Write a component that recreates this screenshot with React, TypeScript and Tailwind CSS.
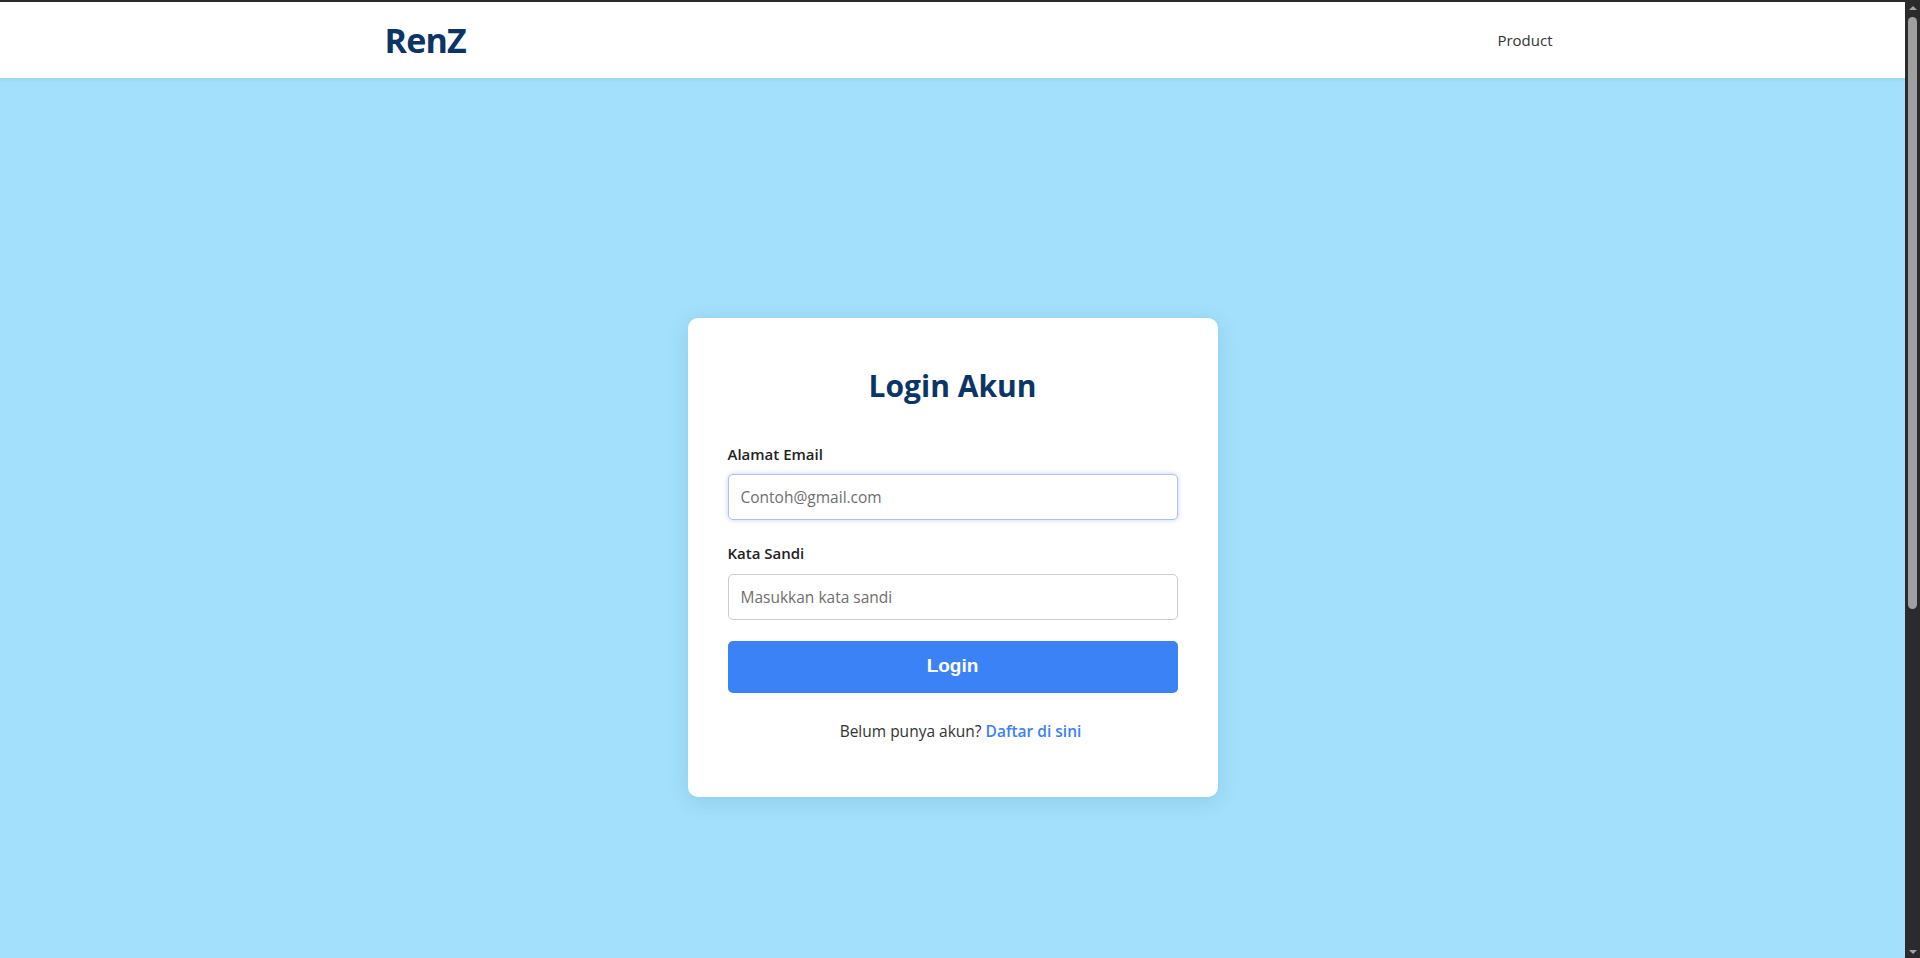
import React from "react";

const sans = { fontFamily: '"Open Sans", "Noto Sans", sans-serif' };

export default function App() {
  return (
    <div className="h-screen w-full overflow-hidden flex flex-col bg-[#2b2b2b]" style={sans}>
      <div className="h-[2px] w-full bg-[#2b2b2b] shrink-0" />
      <div className="flex flex-1 min-h-0">
        <div className="flex-1 flex flex-col min-w-0 overflow-hidden">
          <nav className="h-[76px] shrink-0 bg-white shadow-[0_2px_4px_rgba(0,0,0,0.06)] relative z-10">
            <div className="w-[1200px] mx-auto h-full pl-8 flex items-center justify-between">
              <div className="text-[34px] font-bold text-[#0a3566] tracking-[-0.8px] leading-none">RenZ</div>
              <a className="text-[15px] text-[#333] leading-none">Product</a>
            </div>
          </nav>
          <main className="min-h-[958px] shrink-0 bg-[#a3e0fb] flex items-center justify-center">
            <div className="w-[530px] bg-white rounded-[10px] px-10 pt-10 pb-[56px] shadow-[0_4px_22px_rgba(0,60,110,0.12)]">
              <h2 className="mt-2 text-[30px] leading-10 font-bold text-[#0a3566] text-center mb-[38px]">Login Akun</h2>
              <label className="block text-[15px] leading-5 font-semibold text-[#222] mb-[10px]">Alamat Email</label>
              <input
                type="email"
                placeholder="Contoh@gmail.com"
                className="block w-full h-[46px] px-3 rounded-[5px] border border-[#b7c2d8] shadow-[0_0_5px_rgba(59,130,246,0.35)] text-[15.5px] text-[#333] placeholder:text-[#6f6f6f] outline-none bg-white"
                style={sans}
              />
              <label className="block mt-[23px] text-[15px] leading-5 font-semibold text-[#222] mb-[11px]">Kata Sandi</label>
              <input
                type="password"
                placeholder="Masukkan kata sandi"
                className="block w-full h-[46px] px-3 rounded-[5px] border border-[#cccccc] text-[15.5px] text-[#333] placeholder:text-[#6f6f6f] outline-none bg-white"
                style={sans}
              />
              <button
                className="mt-[21px] w-full h-[52px] rounded-[5px] bg-[#3b82f6] text-white text-[19px] font-bold"
                style={{ fontFamily: '"Liberation Sans", Arial, sans-serif' }}
              >
                Login
              </button>
              <p className="mt-[28px] pl-4 text-center text-[15.5px] leading-5 text-[#333]">
                Belum punya akun? <a className="text-[#3b82f6] font-semibold">Daftar di sini</a>
              </p>
            </div>
          </main>
        </div>
        <div className="w-[15px] shrink-0 bg-[#2b2b2b] flex flex-col items-center relative">
          <div className="mt-[4px] w-0 h-0 border-l-[4px] border-r-[4px] border-b-[4px] border-l-transparent border-r-transparent border-b-[#a3a3a3]" />
          <div className="mt-[7px] w-[9px] h-[592px] rounded-full bg-[#9f9f9f]" />
          <div className="flex-1" />
          <div className="mb-[4px] w-0 h-0 border-l-[4px] border-r-[4px] border-t-[4px] border-l-transparent border-r-transparent border-t-[#a3a3a3]" />
        </div>
      </div>
    </div>
  );
}
